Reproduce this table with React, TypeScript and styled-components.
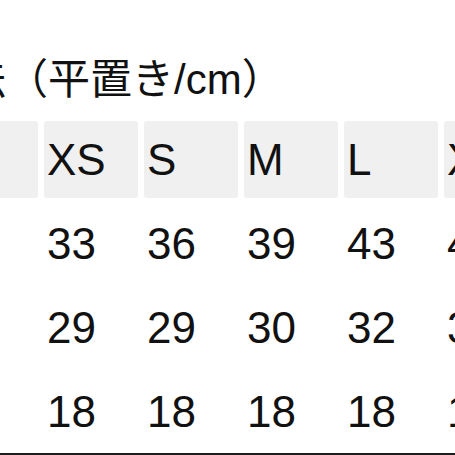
import React from "react";
import styled, { createGlobalStyle } from "styled-components";

const GlobalStyle = createGlobalStyle`
  html, body {
    margin: 0;
    padding: 0;
    background: #ffffff;
    overflow: hidden;
  }
  body {
    width: 455px;
    height: 455px;
    font-family: "Liberation Sans", "Noto Sans CJK JP", sans-serif;
    color: #111111;
  }
`;

const Page = styled.div`
  width: 455px;
  height: 455px;
  overflow: hidden;
  display: flex;
  flex-direction: column;
`;

const Title = styled.h2`
  margin: 0;
  padding-top: 56px;
  margin-left: -78px;
  height: 121px;
  flex-shrink: 0;
  box-sizing: border-box;
  font-weight: 400;
  font-size: 42px;
  line-height: 48px;
  white-space: nowrap;
  font-family: "Liberation Sans", "Noto Sans CJK JP", sans-serif;
`;

const Table = styled.div`
  margin-left: -56px;
  display: grid;
  grid-template-columns: repeat(6, 94px);
  grid-auto-rows: 77px;
  column-gap: 6px;
  row-gap: 7px;
  flex-shrink: 0;
`;

const Cell = styled.div<{ $head?: boolean }>`
  display: flex;
  align-items: center;
  padding-left: 3px;
  border-radius: 3px;
  background: ${(p) => (p.$head ? "#f0f0f0" : "transparent")};
  font-size: 44px;
  line-height: 1;
  white-space: nowrap;
`;

const Rule = styled.div`
  margin-top: 3px;
  height: 2px;
  flex-shrink: 0;
  background: #1c1c1c;
  width: 100%;
`;

const sizes = ["XS", "S", "M", "L", "XL"];
const rows = [
  ["33", "36", "39", "43", "47"],
  ["29", "29", "30", "32", "34"],
  ["18", "18", "18", "18", "18"],
];

export default function App() {
  return (
    <Page>
      <GlobalStyle />
      <Title>寸法（平置き/cm）</Title>
      <Table>
        <Cell $head />
        {sizes.map((s) => (
          <Cell $head key={s}>
            {s}
          </Cell>
        ))}
        {rows.map((r, i) => (
          <React.Fragment key={i}>
            <Cell />
            {r.map((v, j) => (
              <Cell key={j}>{v}</Cell>
            ))}
          </React.Fragment>
        ))}
      </Table>
      <Rule />
    </Page>
  );
}
